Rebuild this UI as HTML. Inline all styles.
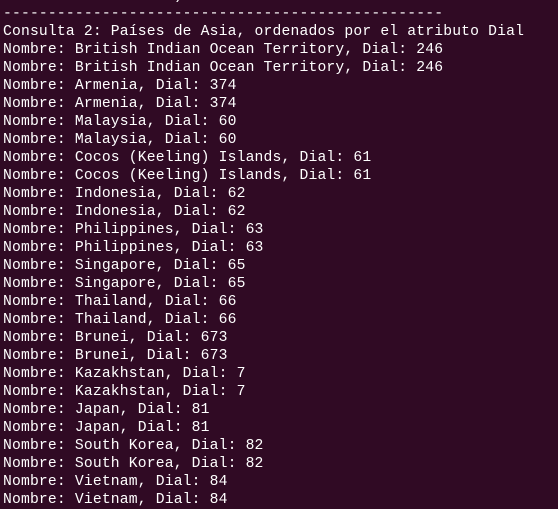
<!DOCTYPE html>
<html><head><meta charset="utf-8"><style>
html,body{margin:0;padding:0;background:#300a24;width:558px;height:498px;overflow:hidden}
pre{position:absolute;left:3px;top:-13px;margin:0;font-family:"Liberation Mono","DejaVu Sans Mono",monospace;font-size:14.7px;letter-spacing:0.17px;line-height:18px;color:#ffffff;white-space:pre}
</style></head><body><pre>                   )
-------------------------------------------------
Consulta 2: Países de Asia, ordenados por el atributo Dial
Nombre: British Indian Ocean Territory, Dial: 246
Nombre: British Indian Ocean Territory, Dial: 246
Nombre: Armenia, Dial: 374
Nombre: Armenia, Dial: 374
Nombre: Malaysia, Dial: 60
Nombre: Malaysia, Dial: 60
Nombre: Cocos (Keeling) Islands, Dial: 61
Nombre: Cocos (Keeling) Islands, Dial: 61
Nombre: Indonesia, Dial: 62
Nombre: Indonesia, Dial: 62
Nombre: Philippines, Dial: 63
Nombre: Philippines, Dial: 63
Nombre: Singapore, Dial: 65
Nombre: Singapore, Dial: 65
Nombre: Thailand, Dial: 66
Nombre: Thailand, Dial: 66
Nombre: Brunei, Dial: 673
Nombre: Brunei, Dial: 673
Nombre: Kazakhstan, Dial: 7
Nombre: Kazakhstan, Dial: 7
Nombre: Japan, Dial: 81
Nombre: Japan, Dial: 81
Nombre: South Korea, Dial: 82
Nombre: South Korea, Dial: 82
Nombre: Vietnam, Dial: 84
Nombre: Vietnam, Dial: 84</pre></body></html>
